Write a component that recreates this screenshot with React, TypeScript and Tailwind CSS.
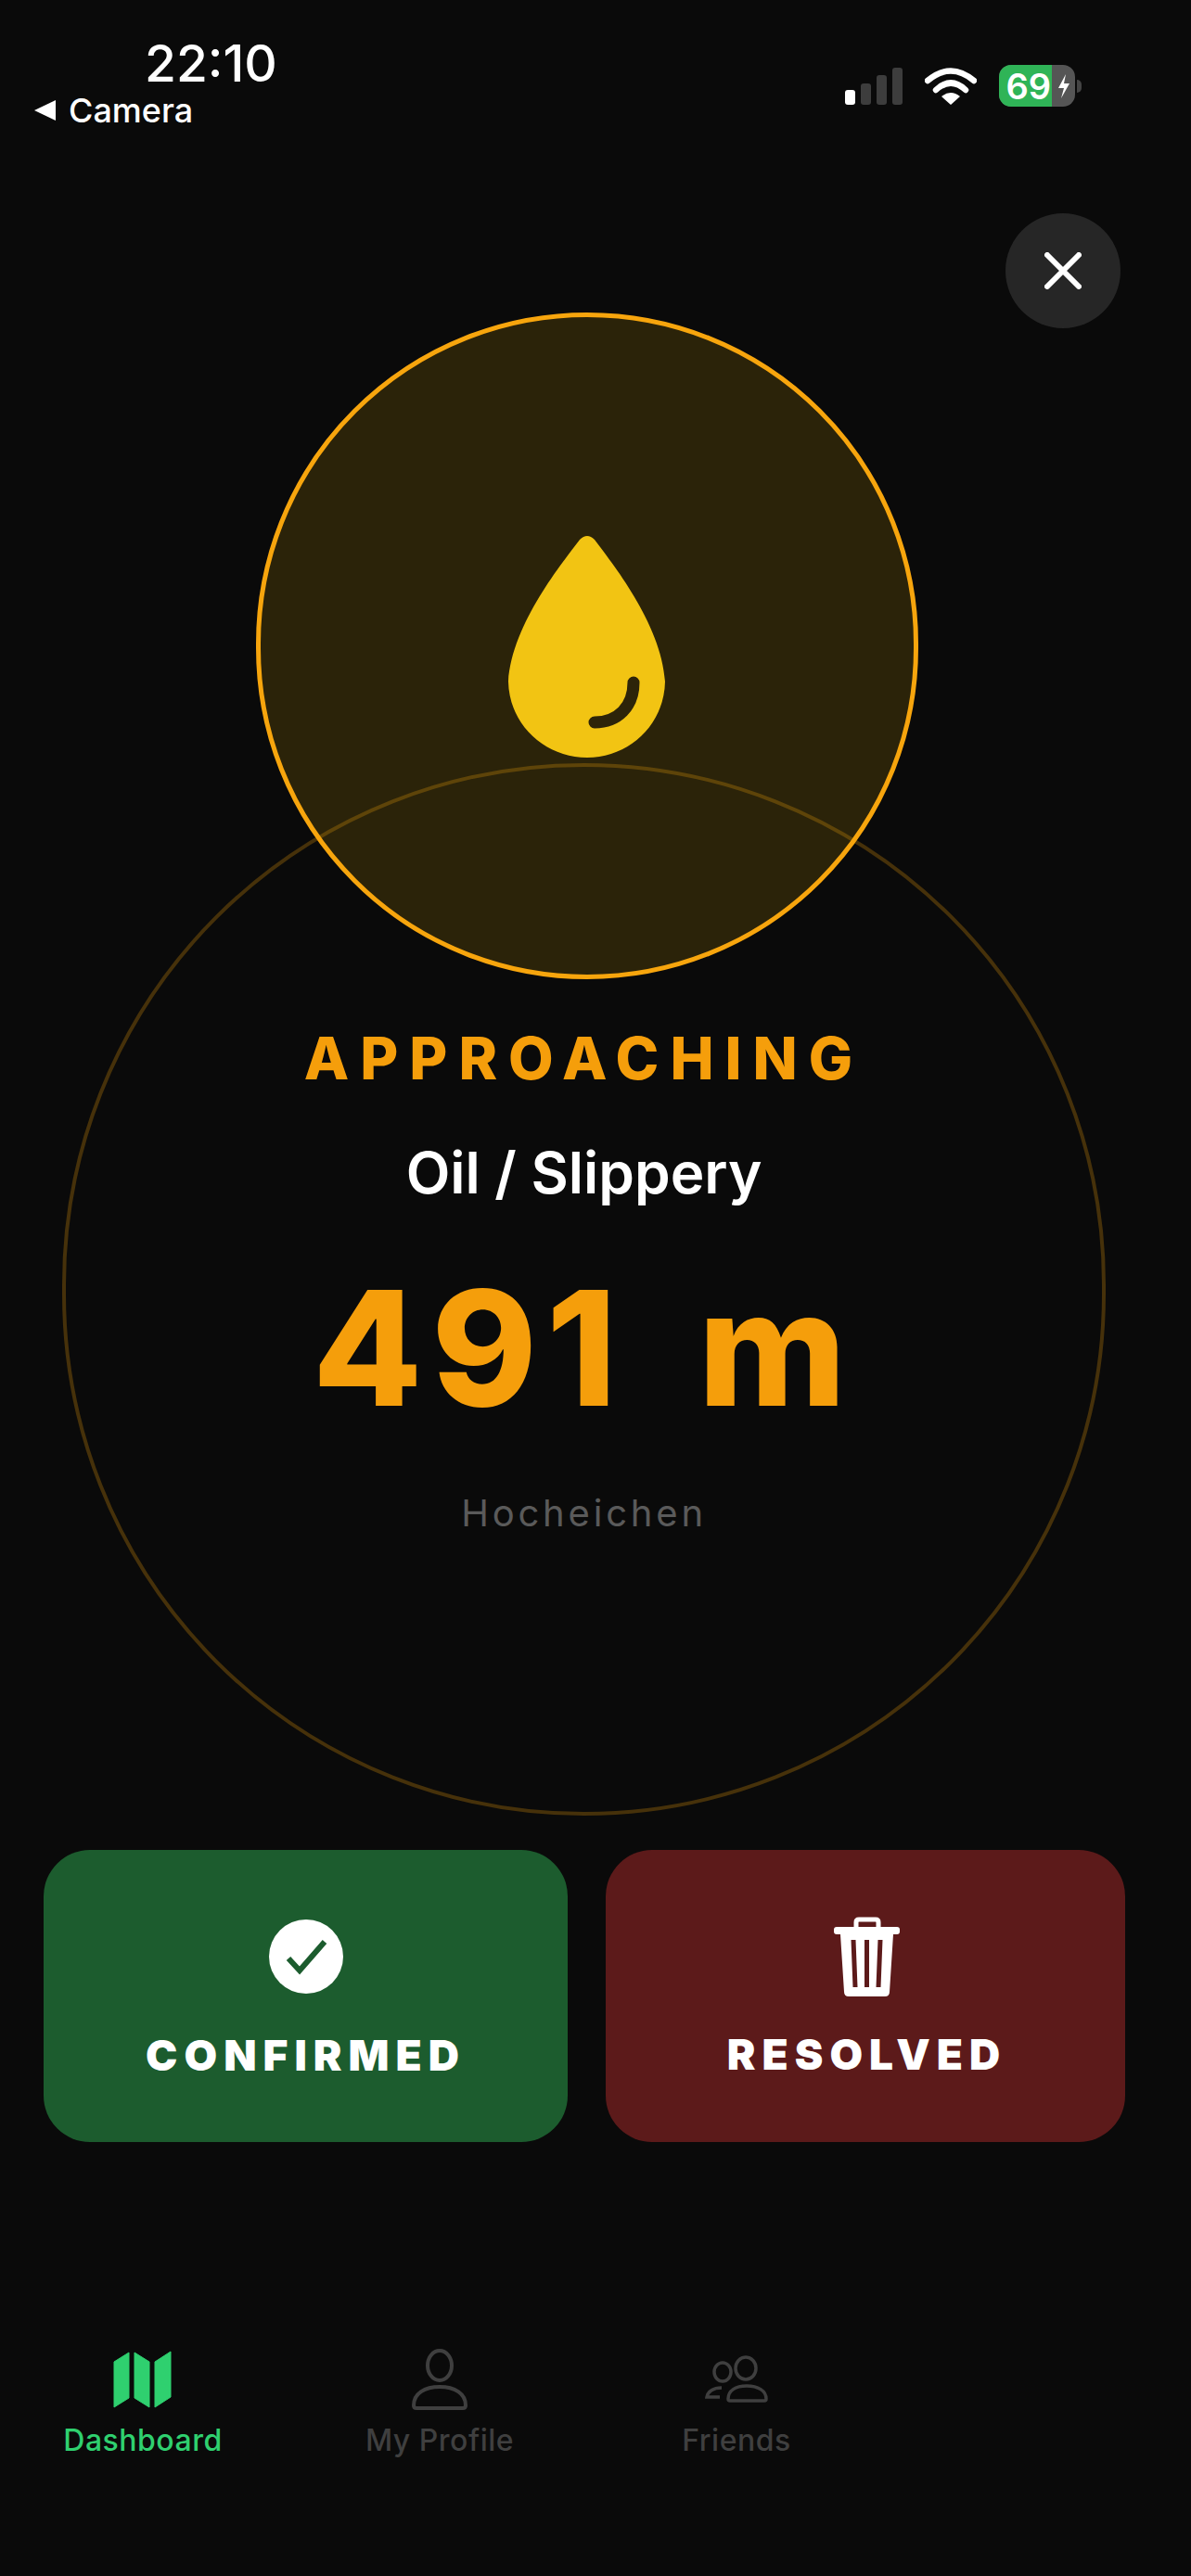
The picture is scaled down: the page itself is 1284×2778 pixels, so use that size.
const inter = "font-['Inter','Liberation_Sans',sans-serif]";

function IconSignal() {
  return (
    <div className="flex h-[40px] items-end gap-[6px]">
      <span className="h-[16px] w-[11px] rounded-[3px] bg-white" />
      <span className="h-[23px] w-[11px] rounded-[3px] bg-[#3d3d3d]" />
      <span className="h-[32px] w-[11px] rounded-[3px] bg-[#3d3d3d]" />
      <span className="h-[40px] w-[11px] rounded-[3px] bg-[#3d3d3d]" />
    </div>
  );
}

function IconWifi() {
  return (
    <svg width="56" height="40" viewBox="0 0 56 40" fill="none" aria-hidden>
      <path d="M3 14Q28 -7 53 14" stroke="white" strokeWidth="6.5" strokeLinecap="round" />
      <path d="M12 24Q28 9 44 24" stroke="white" strokeWidth="6.5" strokeLinecap="round" />
      <path d="M28 40L18 31Q28 23 38 31Z" fill="white" />
    </svg>
  );
}

function Battery() {
  return (
    <div className="flex items-center gap-[2px]">
      <div className="flex h-[45px] w-[82px] overflow-hidden rounded-[13px] bg-[#555555]">
        <div className="flex w-[57px] items-center justify-end bg-[#2fb457] pr-[1px] text-[38px] leading-none font-semibold text-white">
          69
        </div>
        <div className="flex flex-1 items-center justify-center">
          <svg width="16" height="28" viewBox="0 0 16 28" fill="none" aria-hidden>
            <path d="M10 1L2 16H8L5 27L14 11H8Z" fill="white" />
          </svg>
        </div>
      </div>
      <span className="h-[14px] w-[5px] rounded-r-full bg-[#444444]" />
    </div>
  );
}

function StatusBar() {
  return (
    <div className="flex h-[230px] justify-between pt-[38px] pr-[118px]">
      <div className="flex flex-col">
        <span className="ml-[156px] text-[55px] leading-[60px] font-medium text-white">22:10</span>
        <div className="mt-[3px] ml-[37px] flex h-[36px] items-center gap-[14px]">
          <svg width="23" height="22" viewBox="0 0 23 22" aria-hidden>
            <path d="M23 0V22L0 11Z" fill="white" />
          </svg>
          <span className="text-[36px] leading-none font-medium text-white">Camera</span>
        </div>
      </div>
      <div className="mt-[32px] flex h-[45px] items-center gap-[24px]">
        <IconSignal />
        <IconWifi />
        <Battery />
      </div>
    </div>
  );
}

function CloseButton() {
  return (
    <div className="flex justify-end pr-[76px]">
      <button type="button" className="flex h-[124px] w-[124px] items-center justify-center rounded-full bg-[#262626]">
        <svg width="40" height="40" viewBox="0 0 40 40" fill="none" aria-hidden>
          <path d="M3 3L37 37M37 3L3 37" stroke="white" strokeWidth="6" strokeLinecap="round" />
        </svg>
      </button>
    </div>
  );
}

function OilDrop() {
  return (
    <svg width="170" height="240" viewBox="0 0 170 240" fill="none" aria-hidden>
      <path
        d="M77 5Q85 -3 93 5C110 28 165 95 169 158C168 205 130 240 85 240C40 240 1 205 0 158C4 95 60 28 77 5Z"
        fill="#f2c413"
      />
      <path d="M135 159C135 185 118 202 93 202" stroke="#2d2409" strokeWidth="13" strokeLinecap="round" />
    </svg>
  );
}

function Hero() {
  return (
    <div className="-mt-[17px] flex flex-col">
      <div className="relative z-10 ml-[276px] flex h-[719px] w-[714px] items-center justify-center rounded-full border-[5px] border-[#f7a50d] bg-[#eab30826]">
        <OilDrop />
      </div>
      <div className="-mt-[233px] ml-[67px] flex h-[1135px] w-[1125px] flex-col items-center rounded-full border-[4px] border-[#46310a]">
        <div className="mt-[276px] text-[63px] leading-[76px] font-extrabold tracking-[12px] text-[#f59e0b]">APPROACHING</div>
        <div className="mt-[48px] text-[62px] leading-[76px] font-semibold text-white">Oil / Slippery</div>
        <div className="mt-[55px] text-[172px] leading-[190px] font-extrabold tracking-[10px] [word-spacing:30px] text-[#f59e0b]">491 m</div>
        <div className="mt-[59px] text-[40px] leading-[50px] tracking-[3.8px] text-[#5a5a5a]">Hocheichen</div>
      </div>
    </div>
  );
}

function IconCheck() {
  return (
    <svg width="80" height="80" viewBox="0 0 80 80" fill="none" aria-hidden>
      <circle cx="40" cy="40" r="40" fill="white" />
      <path d="M21 42L33 55L60 24" stroke="#1c5c2e" strokeWidth="6" />
    </svg>
  );
}

function IconTrash() {
  return (
    <svg width="71" height="86" viewBox="0 0 71 86" fill="none" aria-hidden>
      <path d="M24 12V6Q24 3 27 3H45Q48 3 48 6V12" stroke="white" strokeWidth="5" />
      <rect x="0" y="11" width="71" height="8" rx="3" fill="white" />
      <path d="M7 19H64L60 81Q60 86 55 86H16Q11 86 11 81Z" fill="white" />
      <path d="M21 25L23 76M35.5 25V76M50 25L48 76" stroke="#5c1a1a" strokeWidth="5" />
    </svg>
  );
}

function Actions() {
  return (
    <div className="mt-[37px] ml-[47px] flex gap-[41px]">
      <button type="button" className="flex h-[315px] w-[565px] flex-col items-center rounded-[50px] bg-[#1c5c2e] pt-[75px] text-white">
        <IconCheck />
        <span className="mt-[41px] text-[46px] leading-[50px] font-black tracking-[7px]">CONFIRMED</span>
      </button>
      <button type="button" className="flex h-[315px] w-[560px] flex-col items-center rounded-[50px] bg-[#5c1a1a] pt-[72px] pl-[3px] text-white">
        <IconTrash />
        <span className="mt-[37px] text-[46px] leading-[50px] font-black tracking-[7px]">RESOLVED</span>
      </button>
    </div>
  );
}

function IconMap() {
  return (
    <svg width="64" height="62" viewBox="0 0 64 62" fill="#2fd06f" stroke="#2fd06f" strokeWidth="1" strokeLinejoin="round" aria-hidden>
      <path d="M1 12L17 2V51L1 61Z" />
      <path d="M23 2L39 12V61L23 51Z" />
      <path d="M45 12L62 1V50L45 61Z" />
    </svg>
  );
}

function IconPerson() {
  return (
    <svg width="60" height="66" viewBox="0 0 60 66" fill="none" stroke="#3f3f3f" strokeWidth="4" aria-hidden>
      <ellipse cx="30" cy="18" rx="13" ry="16" />
      <path d="M2 61C2 48 14 41 30 41C46 41 58 48 58 61Q58 64 55 64H5Q2 64 2 61Z" />
    </svg>
  );
}

function IconFriends() {
  return (
    <svg width="70" height="52" viewBox="0 0 70 52" fill="none" stroke="#3f3f3f" strokeWidth="3.5" aria-hidden>
      <ellipse cx="45" cy="14" rx="11" ry="12" />
      <ellipse cx="20" cy="18" rx="9" ry="10" />
      <path d="M26 47C26 38 34 33 46 33C58 33 67 38 67 47Q67 49 65 49H28Q26 49 26 47Z" />
      <path d="M19 35C10 35 4 39 3 45H17" />
    </svg>
  );
}

function TabItem({ label, active, children }: { label: string; active?: boolean; children: React.ReactNode }) {
  return (
    <div className="flex w-[320px] flex-col items-center">
      <div className="flex h-[66px] items-center justify-center">{children}</div>
      <span className={active ? "mt-[13px] text-[32px] leading-[40px] font-medium tracking-[0.5px] text-[#2fd06f]" : "mt-[13px] text-[32px] leading-[40px] font-medium tracking-[0.5px] text-[#3f3f3f]"}>
        {label}
      </span>
    </div>
  );
}

function TabBar() {
  return (
    <nav className="mt-[223px] -ml-[6px] flex">
      <TabItem label="Dashboard" active>
        <IconMap />
      </TabItem>
      <TabItem label="My Profile">
        <IconPerson />
      </TabItem>
      <TabItem label="Friends">
        <IconFriends />
      </TabItem>
    </nav>
  );
}

export default function App() {
  return (
    <div className={`${inter} h-[2778px] w-[1284px] overflow-hidden bg-[#0a0a0a]`}>
      <StatusBar />
      <CloseButton />
      <Hero />
      <Actions />
      <TabBar />
    </div>
  );
}
